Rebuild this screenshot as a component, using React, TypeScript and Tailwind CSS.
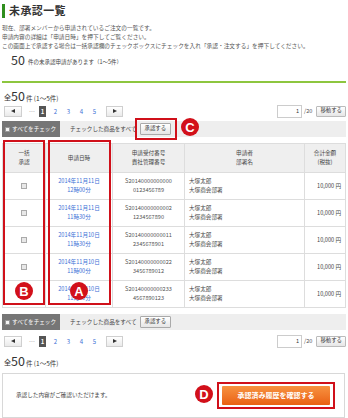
import React from 'react';

const rows = [
  { date: '2014年11月11日', time: '12時00分', no: 'S20140000000000', sub: '0123456789' },
  { date: '2014年11月11日', time: '11時30分', no: 'S20140000000002', sub: '1234567890' },
  { date: '2014年11月10日', time: '11時30分', no: 'S20140000000011', sub: '2345678901' },
  { date: '2014年11月10日', time: '11時00分', no: 'S20140000000022', sub: '3456789012' },
  { date: '2014年11月10日', time: '11時00分', no: 'S20140000000233', sub: '4567890123' },
];

const font = { fontFamily: '"Noto Sans CJK JP", "Noto Sans", sans-serif' };

const Badge: React.FC<{ letter: string; className: string }> = ({ letter, className }) => (
  <div
    className={`absolute flex h-[18px] w-[18px] items-center justify-center rounded-full bg-[#d2101a] text-[13px] font-bold leading-none text-white ${className}`}
    style={{ fontFamily: '"Liberation Sans", Arial, sans-serif' }}
  >
    {letter}
  </div>
);

const Toolbar: React.FC = () => (
  <div className="flex h-[16px] items-center bg-[#eeeeee]">
    <div className="flex h-full w-[58px] items-center gap-[2px] bg-[#767676] pl-[3px]">
      <span className="h-[5px] w-[5px] border border-[#999] bg-[#f4f4f4]" />
      <span className="text-[5.6px] text-white">すべてをチェック</span>
    </div>
    <span className="ml-[10px] text-[5.6px] text-[#444]">チェックした商品をすべて</span>
    <button className="ml-[3px] h-[12px] rounded-[1px] border border-[#aaa] bg-gradient-to-b from-white to-[#e6e6e6] px-[4px] text-[5.4px] leading-none text-[#333]">
      承認する
    </button>
  </div>
);

const Pager: React.FC = () => (
  <div className="flex h-[14px] items-center">
    <button className="ml-[2px] flex h-[11px] w-[18px] items-center justify-center border border-[#cfcfcf] bg-gradient-to-b from-white to-[#eaeaea]">
      <span className="h-0 w-0 border-y-[2.5px] border-r-[4px] border-y-transparent border-r-[#333]" />
    </button>
    <span className="ml-[7px] text-[6px] text-[#888]">…</span>
    <span className="ml-[4px] flex h-[11px] w-[7px] items-center justify-center bg-[#555] text-[6px] font-bold text-white">1</span>
    {['2', '3', '4', '5'].map((n) => (
      <span key={n} className="ml-[6px] w-[7px] text-center text-[6px] text-[#3b6fd6]">
        {n}
      </span>
    ))}
    <button className="ml-[8px] flex h-[11px] w-[17px] items-center justify-center border border-[#cfcfcf] bg-gradient-to-b from-white to-[#eaeaea]">
      <span className="h-0 w-0 border-y-[2.5px] border-l-[4px] border-y-transparent border-l-[#333]" />
    </button>
    <div className="ml-auto flex items-center">
      <div className="flex h-[13px] w-[25px] items-center justify-end border border-[#ccc] bg-white pr-[2px] text-[5.6px] text-[#333]">
        1
      </div>
      <span className="ml-[2px] text-[5.6px] text-[#555]">/20</span>
      <button className="ml-[4px] h-[11px] rounded-[1px] border border-[#bbb] bg-gradient-to-b from-white to-[#e6e6e6] px-[3px] text-[5.4px] leading-none text-[#333]">
        移動する
      </button>
    </div>
  </div>
);

const Count: React.FC = () => (
  <div className="flex h-[13px] items-end pl-[2px] leading-none text-[#333]">
    <span className="text-[7px]">全</span>
    <span className="text-[12.5px] leading-[11px]">50</span>
    <span className="ml-[1px] text-[6.5px]">件 (1〜5件)</span>
  </div>
);

export default function App() {
  return (
    <div className="relative h-[418px] w-[348px] overflow-hidden bg-white px-[2px] text-[#333]" style={font}>
      {/* title */}
      <div className="flex h-[20px] items-center pt-[1px]">
        <span className="h-[14px] w-[3px] bg-[#2f8f1e]" />
        <h1 className="ml-[4px] text-[11px] font-bold tracking-[0.4px] text-[#333]">未承認一覧</h1>
      </div>

      <div className="mt-[3px] text-[5.7px] leading-[9px] text-[#555]">
        <p>現在、部署メンバーから申請されているご注文の一覧です。</p>
        <p>申請内容の詳細は「申請日時」を押下してご覧ください。</p>
        <p>この画面上で承認する場合は一括承認欄のチェックボックスにチェックを入れ「承認・注文する」を押下してください。</p>
      </div>

      <div className="mt-[3px] flex h-[12px] items-end pl-[9px] leading-none">
        <span className="text-[12.5px] leading-[11px] text-[#333]">50</span>
        <span className="ml-[3px] text-[5.5px] text-[#444]">件の未承認申請があります（1〜5件）</span>
      </div>

      <div className="mt-[16px] h-[2px] bg-[#8dc63f]" />

      <div className="mt-[5px]">
        <Count />
      </div>
      <div className="mt-[3px]">
        <Pager />
      </div>
      <div className="mt-[3px]">
        <Toolbar />
      </div>

      <table className="mt-[6px] w-[343px] table-fixed border-collapse text-[5.6px] leading-[9px]">
        <colgroup>
          <col className="w-[43px]" />
          <col className="w-[67px]" />
          <col className="w-[72px]" />
          <col className="w-[120px]" />
          <col className="w-[41px]" />
        </colgroup>
        <thead>
          <tr className="h-[29px] bg-[#efefef] text-[#444]">
            <th className="border border-[#ddd] font-normal">一括<br />承認</th>
            <th className="border border-[#ddd] font-normal">申請日時</th>
            <th className="border border-[#ddd] font-normal">申請受付番号<br />貴社管理番号</th>
            <th className="border border-[#ddd] font-normal">申請者<br />部署名</th>
            <th className="border border-[#ddd] font-normal">合計金額<br />(税抜)</th>
          </tr>
        </thead>
        <tbody>
          {rows.map((r, i) => (
            <tr key={i} className="h-[27px]">
              <td className="border border-[#ddd] text-center">
                <span className="inline-block h-[6px] w-[6px] border border-[#aaa] bg-[#e8e8e8] align-middle" />
              </td>
              <td className="border border-[#ddd] text-center text-[#3b6fd6]">
                {r.date}
                <br />
                {r.time}
              </td>
              <td className="border border-[#ddd] text-center text-[#555]">
                {r.no}
                <br />
                {r.sub}
              </td>
              <td className="border border-[#ddd] pl-[4px] text-left text-[#444]">
                大塚太郎
                <br />
                大塚商会部署
              </td>
              <td className="border border-[#ddd] pr-[4px] text-right text-[#444]">10,000 円</td>
            </tr>
          ))}
        </tbody>
      </table>

      <div className="mt-[6px]">
        <Toolbar />
      </div>
      <div className="mt-[4px]">
        <Pager />
      </div>
      <div className="mt-[5px]">
        <Count />
      </div>

      <div className="mt-[7px] flex h-[45px] w-[343px] items-center border border-[#d8d8d8] pl-[13px]">
        <span className="text-[5.6px] text-[#444]">承認した内容がご確認いただけます。</span>
        <div className="ml-auto mr-[9px] flex h-[27px] w-[118px] items-center justify-center border-[2px] border-[#d0101a]">
          <button className="h-[19px] w-[108px] rounded-[1px] bg-gradient-to-b from-[#f7923f] to-[#e9600f] text-[7px] font-bold text-white">
            承認済み履歴を確認する
          </button>
        </div>
      </div>

      {/* annotation overlays */}
      <div className="absolute left-[3px] top-[140px] h-[165px] w-[42px] border-[2px] border-[#d0101a]" />
      <div className="absolute left-[48px] top-[140px] h-[165px] w-[63px] border-[2px] border-[#d0101a]" />
      <div className="absolute left-[135px] top-[118px] h-[22px] w-[42px] border-[2px] border-[#d0101a]" />
      <Badge letter="B" className="left-[15px] top-[282px]" />
      <Badge letter="A" className="left-[70px] top-[282px]" />
      <Badge letter="C" className="left-[181px] top-[118px]" />
      <Badge letter="D" className="left-[195px] top-[385px]" />
    </div>
  );
}
